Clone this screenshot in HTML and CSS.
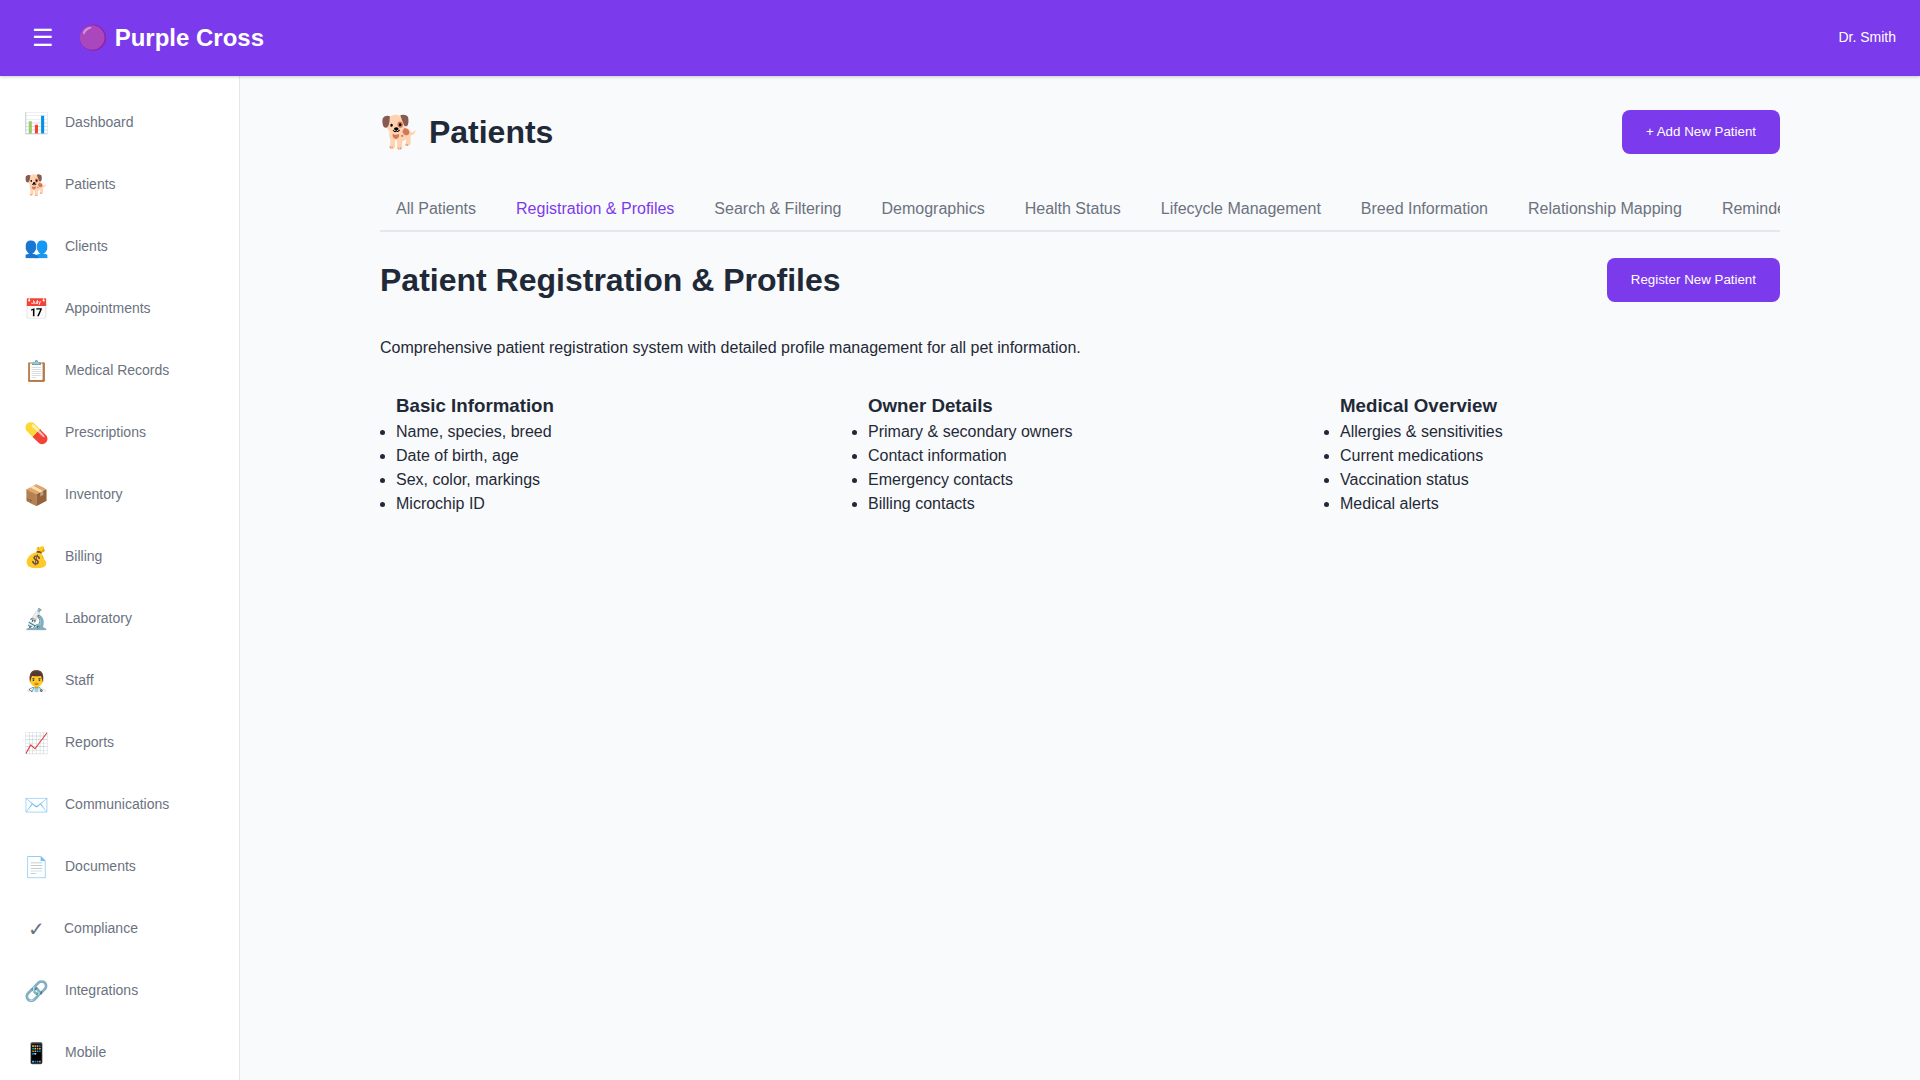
FILE: index.html
```html
<!DOCTYPE html>
<html lang="en">
<head>
<meta charset="utf-8">
<title>Purple Cross</title>
<link rel="stylesheet" href="styles.css">
</head>
<body>
<header class="header">
  <button class="menu-toggle" aria-label="Toggle menu">☰</button>
  <h1 class="logo">🟣 Purple Cross</h1>
  <span class="user">Dr. Smith</span>
</header>
<div class="body">
  <nav class="sidebar">
    <a class="nav-item" href="#"><span class="nav-icon">📊</span><span class="nav-label">Dashboard</span></a>
    <a class="nav-item" href="#"><span class="nav-icon">🐕</span><span class="nav-label">Patients</span></a>
    <a class="nav-item" href="#"><span class="nav-icon">👥</span><span class="nav-label">Clients</span></a>
    <a class="nav-item" href="#"><span class="nav-icon">📅</span><span class="nav-label">Appointments</span></a>
    <a class="nav-item" href="#"><span class="nav-icon">📋</span><span class="nav-label">Medical Records</span></a>
    <a class="nav-item" href="#"><span class="nav-icon">💊</span><span class="nav-label">Prescriptions</span></a>
    <a class="nav-item" href="#"><span class="nav-icon">📦</span><span class="nav-label">Inventory</span></a>
    <a class="nav-item" href="#"><span class="nav-icon">💰</span><span class="nav-label">Billing</span></a>
    <a class="nav-item" href="#"><span class="nav-icon">🔬</span><span class="nav-label">Laboratory</span></a>
    <a class="nav-item" href="#"><span class="nav-icon">👨‍⚕️</span><span class="nav-label">Staff</span></a>
    <a class="nav-item" href="#"><span class="nav-icon">📈</span><span class="nav-label">Reports</span></a>
    <a class="nav-item" href="#"><span class="nav-icon">✉️</span><span class="nav-label">Communications</span></a>
    <a class="nav-item" href="#"><span class="nav-icon">📄</span><span class="nav-label">Documents</span></a>
    <a class="nav-item" href="#"><span class="nav-icon">✓</span><span class="nav-label">Compliance</span></a>
    <a class="nav-item" href="#"><span class="nav-icon">🔗</span><span class="nav-label">Integrations</span></a>
    <a class="nav-item" href="#"><span class="nav-icon">📱</span><span class="nav-label">Mobile</span></a>
  </nav>
  <main class="main">
    <div class="page">
      <div class="page-header">
        <h1>🐕 Patients</h1>
        <button class="btn">+ Add New Patient</button>
      </div>
      <div class="tabs">
        <button class="tab">All Patients</button>
        <button class="tab active">Registration &amp; Profiles</button>
        <button class="tab">Search &amp; Filtering</button>
        <button class="tab">Demographics</button>
        <button class="tab">Health Status</button>
        <button class="tab">Lifecycle Management</button>
        <button class="tab">Breed Information</button>
        <button class="tab">Relationship Mapping</button>
        <button class="tab">Reminders</button>
      </div>
      <div class="page-header">
        <h1>Patient Registration &amp; Profiles</h1>
        <button class="btn">Register New Patient</button>
      </div>
      <p class="intro">Comprehensive patient registration system with detailed profile management for all pet information.</p>
      <div class="features">
        <section class="feature">
          <h3>Basic Information</h3>
          <ul><li>Name, species, breed</li><li>Date of birth, age</li><li>Sex, color, markings</li><li>Microchip ID</li></ul>
        </section>
        <section class="feature">
          <h3>Owner Details</h3>
          <ul><li>Primary &amp; secondary owners</li><li>Contact information</li><li>Emergency contacts</li><li>Billing contacts</li></ul>
        </section>
        <section class="feature">
          <h3>Medical Overview</h3>
          <ul><li>Allergies &amp; sensitivities</li><li>Current medications</li><li>Vaccination status</li><li>Medical alerts</li></ul>
        </section>
      </div>
    </div>
  </main>
</div>
</body>
</html>
```

FILE: styles.css
```css
* { box-sizing: border-box; margin: 0; padding: 0; }
body {
  display: flex;
  flex-direction: column;
  height: 100vh;
  overflow: hidden;
  font-family: "Liberation Sans", Arial, sans-serif;
  font-size: 16px;
  line-height: 24px;
  color: #1f2937;
  background: #f9fafb;
}
button { font-family: inherit; }
.header {
  position: relative;
  z-index: 1;
  display: flex;
  flex-shrink: 0;
  align-items: center;
  gap: 16px;
  padding: 16px 24px;
  background: #7c3aed;
  color: #fff;
  box-shadow: 0 1px 3px rgba(0, 0, 0, 0.2);
}
.menu-toggle {
  padding: 8px;
  border: 0;
  background: none;
  color: #fff;
  font-size: 24px;
  line-height: 28px;
}
.logo { font-size: 24px; line-height: 36px; }
.user { margin-left: auto; padding-bottom: 2px; font-size: 14px; }
.body { display: flex; flex: 1; min-height: 0; }
.sidebar {
  flex: 0 0 240px;
  padding: 16px 0;
  overflow: hidden;
  background: #fff;
  border-right: 1px solid #e5e7eb;
}
.nav-item {
  display: flex;
  align-items: center;
  gap: 16px;
  padding: 12px 24px;
  color: #6b7280;
  font-size: 14px;
  line-height: 22px;
  text-decoration: none;
}
.nav-icon { min-width: 24px; font-size: 20px; line-height: 38px; text-align: center; }
.nav-label { padding-bottom: 2px; }
.main { flex: 1; min-width: 0; padding: 32px; overflow: hidden; }
.page { max-width: 1400px; margin: 0 auto; }
.page-header {
  display: flex;
  justify-content: space-between;
  align-items: center;
  margin-bottom: 32px;
}
.page-header h1 { font-size: 32px; line-height: 48px; }
.btn {
  padding: 14px 24px;
  border: 0;
  border-radius: 8px;
  background: #7c3aed;
  color: #fff;
  line-height: 16px;
}
.tabs {
  display: flex;
  gap: 8px;
  margin-bottom: 24px;
  overflow-x: auto;
  scrollbar-width: none;
  border-bottom: 2px solid #e5e7eb;
}
.tab {
  flex-shrink: 0;
  padding: 12px 16px;
  border: 0;
  background: none;
  color: #6b7280;
  font-size: 16px;
  line-height: 18px;
}
.tab.active { color: #7c3aed; }
.intro { margin-bottom: 32px; }
.features { display: grid; grid-template-columns: repeat(3, 1fr); gap: 16px; }
.feature { padding: 0 16px; }
.feature h3 { line-height: 28px; }
```
